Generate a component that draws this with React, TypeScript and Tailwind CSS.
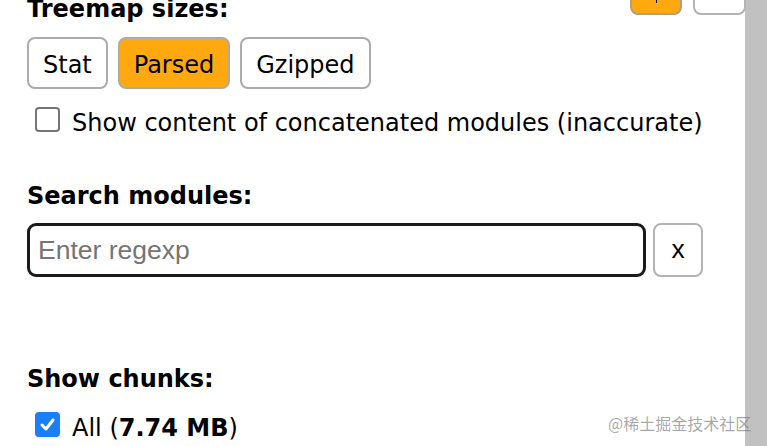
import React from "react";

const verdana = { fontFamily: '"DejaVu Sans", Verdana, sans-serif' };

function Box({ checked }: { checked?: boolean }) {
  if (checked) {
    return (
      <span className="flex h-[25px] w-[25px] shrink-0 items-center justify-center rounded-[4px] bg-[#1a7ff5]">
        <svg width="17" height="17" viewBox="0 0 17 17" fill="none">
          <path d="M3 9 L7 13 L14 4" stroke="white" strokeWidth="3" strokeLinecap="round" strokeLinejoin="round" />
        </svg>
      </span>
    );
  }
  return <span className="block h-[25px] w-[25px] shrink-0 rounded-[4px] border-2 border-[#767676] bg-white" />;
}

export default function App() {
  const btn =
    "flex h-[52px] items-center rounded-[8px] border-2 border-[#ababab] px-[14px] pt-[3px] text-[24px] text-black";
  return (
    <div
      className="relative flex h-[446px] w-[767px] overflow-hidden bg-white text-[24px] leading-[28px] text-black"
      style={verdana}
    >
      <div className="flex flex-1 flex-col pl-[27px]">
        <div className="mt-[-5px] font-bold">Treemap sizes:</div>
        <div className="mt-[14px] flex gap-[10px]">
          <button className={btn + " bg-white"}>Stat</button>
          <button className={btn + " bg-[#ffa80f]"}>Parsed</button>
          <button className={btn + " bg-white"}>Gzipped</button>
        </div>
        <label className="mt-[20px] flex items-start">
          <span className="ml-[8px] mr-[12px] mt-[-2px]">
            <Box />
          </span>
          <span>Show content of concatenated modules (inaccurate)</span>
        </label>
        <div className="mt-[45px] font-bold">Search modules:</div>
        <div className="mt-[13px] flex items-center gap-[7px]">
          <div
            className="flex h-[54px] w-[619px] items-center rounded-[9px] border-[3px] border-[#1b1b1b] pl-[8px] text-[26.5px] text-[#757575]"
            style={{ fontFamily: '"Liberation Sans", Arial, sans-serif' }}
          >
            Enter regexp
          </div>
          <button
            className="flex h-[54px] w-[50px] items-center justify-center rounded-[8px] border-2 border-[#b3b3b3] bg-white pb-[3px] text-[26.5px] text-black"
            style={{ fontFamily: '"Liberation Sans", Arial, sans-serif' }}
          >
            x
          </button>
        </div>
        <div className="mt-[88px] font-bold">Show chunks:</div>
        <label className="mt-[21px] flex items-start">
          <span className="ml-[8px] mr-[12px] mt-[-2px]">
            <Box checked />
          </span>
          <span>
            All (<strong className="font-bold">7.74 MB</strong>)
          </span>
        </label>
      </div>
      <div className="w-[22px] shrink-0 bg-[#c1c1c1]" />

      <div className="absolute left-[630px] top-[-30px] h-[45px] w-[52px] rounded-[8px] border-2 border-[#b0a080] bg-[#ffa80f]">
        <span className="absolute bottom-[10px] left-[24px] h-[4px] w-[1px] bg-black" />
      </div>
      <div className="absolute left-[693px] top-[-30px] h-[45px] w-[53px] rounded-[8px] border-2 border-[#b3b3b3] bg-white" />

      <div
        className="absolute left-[608px] top-[413px] text-[16px] leading-[20px] text-[rgba(110,110,110,0.6)]"
        style={{ fontFamily: '"Noto Sans CJK SC", "DejaVu Sans", sans-serif' }}
      >
        @稀土掘金技术社区
      </div>
    </div>
  );
}
